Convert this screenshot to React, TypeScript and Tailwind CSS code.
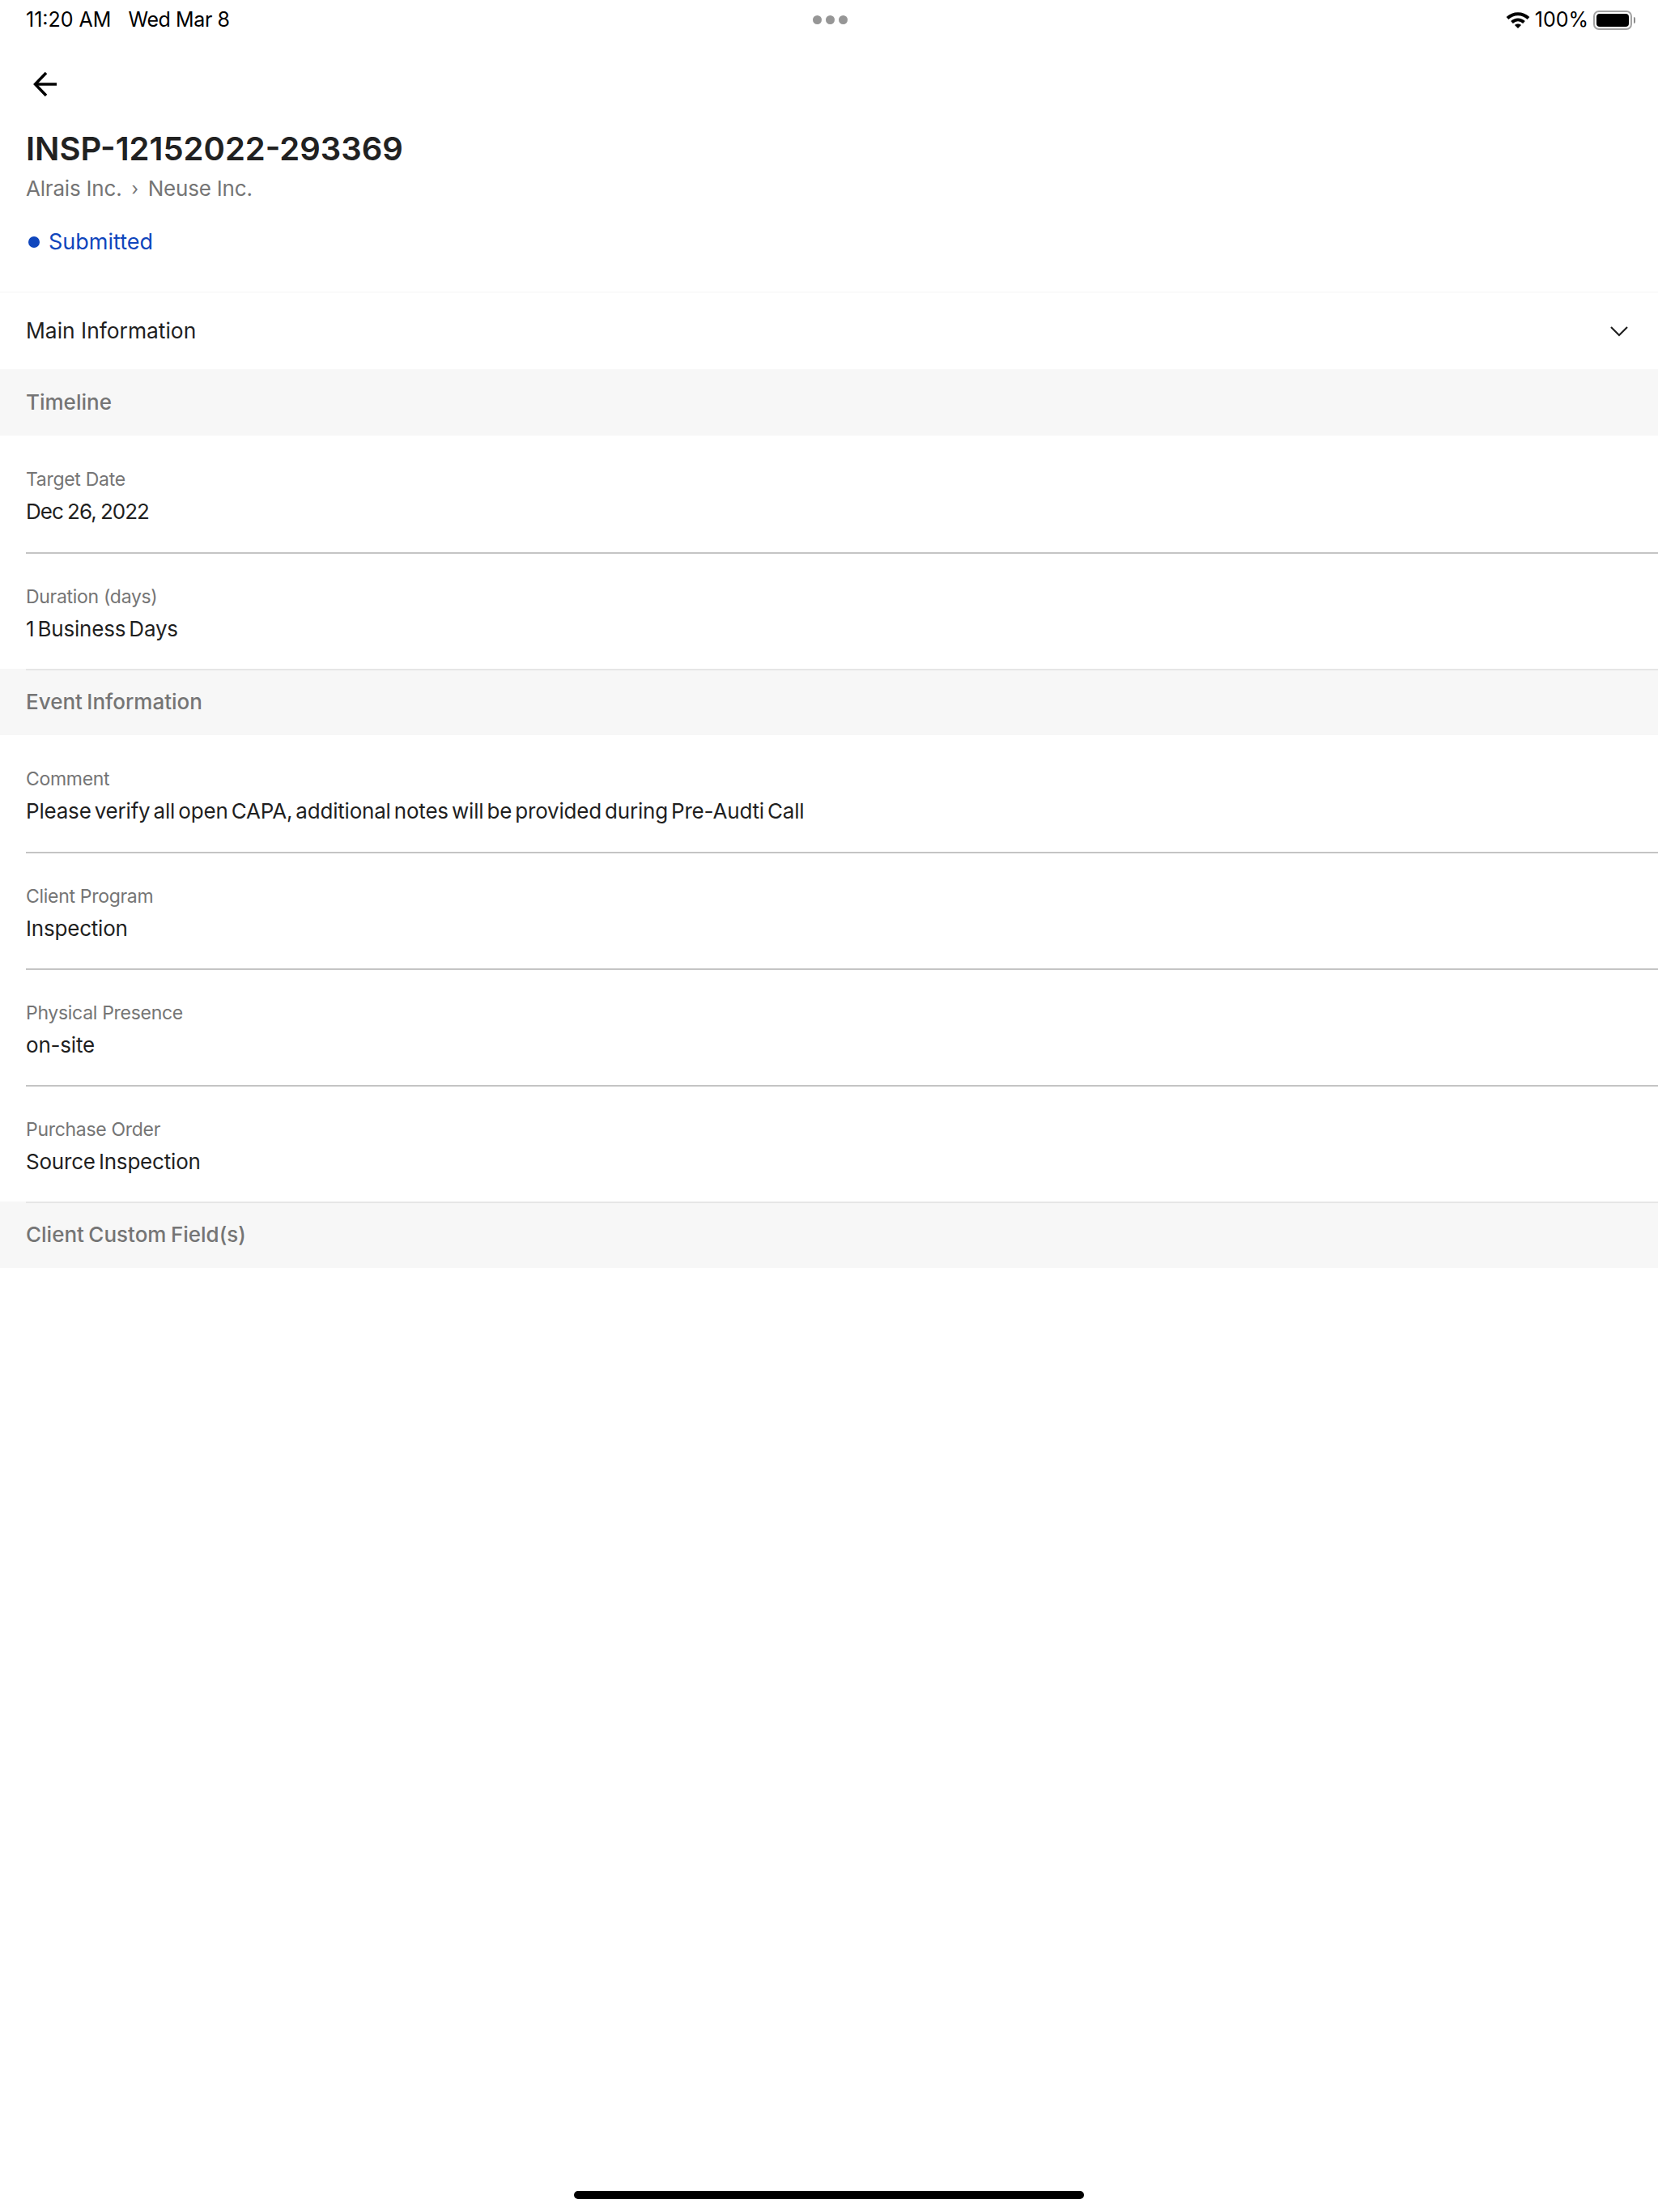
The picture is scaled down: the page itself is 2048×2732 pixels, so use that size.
import React from 'react'

const Section = ({ title, line }: { title: string; line?: boolean }) => (
  <div className="relative h-[82px] bg-[#f7f7f7] px-8 pb-[1px] flex items-center text-[26px] font-medium [word-spacing:-1.5px] text-[#757575]">
    {line && <div className="absolute top-0 left-8 right-0 h-[2px] bg-[#e6e6e6]" />}
    {title}
  </div>
)

type FieldProps = { label: string; value: string; first?: boolean; last?: boolean; tight?: boolean }

const Field = ({ label, value, first, last, tight }: FieldProps) => (
  <div className={`ml-8 ${first ? 'h-[146px] pt-[39px] border-b-2 border-[#c4c4c4]' : last ? 'h-[142px] pt-[38px]' : 'h-[144px] pt-[38px] border-b-2 border-[#c4c4c4]'}`}>
    <div className="text-[23px] leading-[30px] tracking-[-0.3px] text-[#757575]">{label}</div>
    <div className={`mt-[10px] text-[26px] leading-[29px] text-[#1f1f1f] ${tight ? 'tracking-[-1px] [word-spacing:-1px]' : 'tracking-[-0.2px] [word-spacing:-3px]'}`}>{value}</div>
  </div>
)

export default function App() {
  return (
    <div className="relative w-[2048px] h-[2732px] bg-white font-['Inter',sans-serif]">
      <div className="h-[48px] grid grid-cols-3 items-center pl-8 pr-[28px] pt-[1px] text-[25px] text-black">
        <div className="flex gap-[21px]">
          <span>11:20 AM</span>
          <span className="tracking-[-0.4px]">Wed Mar 8</span>
        </div>
        <div className="flex justify-center gap-[5px]">
          <span className="w-[11px] h-[11px] rounded-full bg-[#969696]" />
          <span className="w-[11px] h-[11px] rounded-full bg-[#969696]" />
          <span className="w-[11px] h-[11px] rounded-full bg-[#969696]" />
        </div>
        <div className="flex items-center justify-end gap-[6px]">
          <svg width="30" height="22" viewBox="0 0 30 22" fill="none" stroke="black" strokeWidth="4">
            <path d="M2 8.5C9.5 1.5 20.5 1.5 28 8.5" />
            <path d="M7.5 13.5C12 9.5 18 9.5 22.5 13.5" />
            <path d="M15 21L11 17C13 15 17 15 19 17Z" fill="black" stroke="none" />
          </svg>
          <span>100%</span>
          <div className="flex items-center gap-[2px]">
            <div className="w-[48px] h-[24px] rounded-[7px] border-2 border-[#a3a3a3] p-[2px]">
              <div className="w-full h-full rounded-[4px] bg-black" />
            </div>
            <div className="w-[2px] h-[8px] rounded-r bg-[#8c8c8c]" />
          </div>
        </div>
      </div>

      <div className="h-[312px] pl-8 pt-[40px]">
        <svg className="ml-[9px]" width="30" height="32" viewBox="0 0 30 32" fill="none" stroke="black" strokeWidth="3.5">
          <path d="M29 16H3" />
          <path d="M16 2L2.5 16L16 30" />
        </svg>
        <h1 className="mt-[40px] text-[40px] leading-[48px] font-semibold text-[#212121]">INSP-12152022-293369</h1>
        <div className="mt-[8px] flex items-center text-[26px] leading-[34px] tracking-[-0.2px] text-[#757575]">
          <span>Alrais Inc.</span>
          <span className="mx-[12px] text-[22px]">›</span>
          <span>Neuse Inc.</span>
        </div>
        <div className="mt-[32px] flex items-center gap-[11px] text-[27px] leading-[34px] text-[#0f46bd]">
          <span className="ml-[3px] w-[14px] h-[14px] rounded-full bg-[#0f46bd]" />
          <span>Submitted</span>
        </div>
      </div>

      <div className="h-[96px] border-t-2 border-[#fafafa] pl-8 pr-[36px] flex items-center justify-between text-[26.4px] text-[#1f1f1f]">
        <span>Main Information</span>
        <svg className="-mt-[1px]" width="24" height="14" viewBox="0 0 24 14" fill="none" stroke="#1f1f1f" strokeWidth="2.2">
          <path d="M2 2L12 12L22 2" />
        </svg>
      </div>

      <Section title="Timeline" />
      <Field first tight label="Target Date" value="Dec 26, 2022" />
      <Field last label="Duration (days)" value="1 Business Days" />
      <Section line title="Event Information" />
      <Field first label="Comment" value="Please verify all open CAPA, additional notes will be provided during Pre-Audti Call" />
      <Field label="Client Program" value="Inspection" />
      <Field label="Physical Presence" value="on-site" />
      <Field last label="Purchase Order" value="Source Inspection" />
      <Section line title="Client Custom Field(s)" />

      <div className="absolute left-[709px] top-[2706px] w-[630px] h-[10px] rounded-full bg-black" />
    </div>
  )
}
